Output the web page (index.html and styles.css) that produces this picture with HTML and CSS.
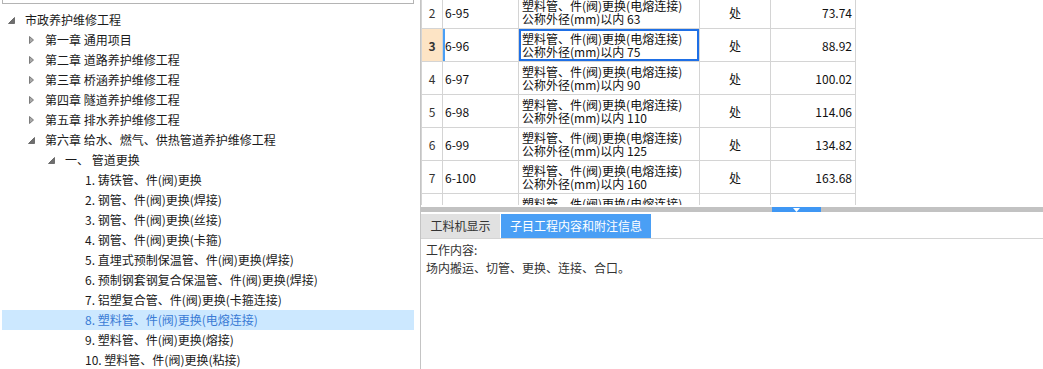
FILE: index.html
```html
<!DOCTYPE html>
<html lang="zh-CN">
  <head>
    <meta charset="utf-8">
    <title>定额库</title>
    <link rel="stylesheet" href="styles.css">
  </head>
  <body>
    <div class="tree-panel">
      <div class="search"></div>
      <ul class="tree">
        <li class="lv0"><span class="twisty"><svg width="7" height="7"><polygon points="6.5,0.5 6.5,6.5 0.5,6.5" class="open"/></svg></span><span class="label">市政养护维修工程</span></li>
        <li class="lv1"><span class="twisty"><svg width="5" height="8"><polygon points="0.5,0.5 4.5,4 0.5,7.5" class="shut"/></svg></span><span class="label">第一章 通用项目</span></li>
        <li class="lv1"><span class="twisty"><svg width="5" height="8"><polygon points="0.5,0.5 4.5,4 0.5,7.5" class="shut"/></svg></span><span class="label">第二章 道路养护维修工程</span></li>
        <li class="lv1"><span class="twisty"><svg width="5" height="8"><polygon points="0.5,0.5 4.5,4 0.5,7.5" class="shut"/></svg></span><span class="label">第三章 桥涵养护维修工程</span></li>
        <li class="lv1"><span class="twisty"><svg width="5" height="8"><polygon points="0.5,0.5 4.5,4 0.5,7.5" class="shut"/></svg></span><span class="label">第四章 隧道养护维修工程</span></li>
        <li class="lv1"><span class="twisty"><svg width="5" height="8"><polygon points="0.5,0.5 4.5,4 0.5,7.5" class="shut"/></svg></span><span class="label">第五章 排水养护维修工程</span></li>
        <li class="lv1"><span class="twisty"><svg width="7" height="7"><polygon points="6.5,0.5 6.5,6.5 0.5,6.5" class="open"/></svg></span><span class="label">第六章 给水、燃气、供热管道养护维修工程</span></li>
        <li class="lv2"><span class="twisty"><svg width="7" height="7"><polygon points="6.5,0.5 6.5,6.5 0.5,6.5" class="open"/></svg></span><span class="label">一、 管道更换</span></li>
        <li class="lv3"><span class="twisty"></span><span class="label">1. 铸铁管、件(阀)更换</span></li>
        <li class="lv3"><span class="twisty"></span><span class="label">2. 钢管、件(阀)更换(焊接)</span></li>
        <li class="lv3"><span class="twisty"></span><span class="label">3. 钢管、件(阀)更换(丝接)</span></li>
        <li class="lv3"><span class="twisty"></span><span class="label">4. 钢管、件(阀)更换(卡箍)</span></li>
        <li class="lv3"><span class="twisty"></span><span class="label">5. 直埋式预制保温管、件(阀)更换(焊接)</span></li>
        <li class="lv3"><span class="twisty"></span><span class="label">6. 预制钢套钢复合保温管、件(阀)更换(焊接)</span></li>
        <li class="lv3"><span class="twisty"></span><span class="label">7. 铝塑复合管、件(阀)更换(卡箍连接)</span></li>
        <li class="lv3 selected"><span class="twisty"></span><span class="label">8. 塑料管、件(阀)更换(电熔连接)</span></li>
        <li class="lv3"><span class="twisty"></span><span class="label">9. 塑料管、件(阀)更换(熔接)</span></li>
        <li class="lv3"><span class="twisty"></span><span class="label">10. 塑料管、件(阀)更换(粘接)</span></li>
      </ul>
    </div>

    <div class="main">
      <div class="grid-view">
        <table class="items">
          <colgroup>
            <col class="c-no"><col class="c-code"><col class="c-name"><col class="c-unit"><col class="c-amount">
          </colgroup>
          <tr>
            <td class="no">2</td><td class="code">6-95</td>
            <td class="name">塑料管、件(阀)更换(电熔连接)<br>公称外径(mm)以内 63</td>
            <td class="unit">处</td><td class="amount">73.74</td>
          </tr>
          <tr class="current">
            <td class="no">3</td><td class="code">6-96</td>
            <td class="name">塑料管、件(阀)更换(电熔连接)<br>公称外径(mm)以内 75</td>
            <td class="unit">处</td><td class="amount">88.92</td>
          </tr>
          <tr>
            <td class="no">4</td><td class="code">6-97</td>
            <td class="name">塑料管、件(阀)更换(电熔连接)<br>公称外径(mm)以内 90</td>
            <td class="unit">处</td><td class="amount">100.02</td>
          </tr>
          <tr>
            <td class="no">5</td><td class="code">6-98</td>
            <td class="name">塑料管、件(阀)更换(电熔连接)<br>公称外径(mm)以内 110</td>
            <td class="unit">处</td><td class="amount">114.06</td>
          </tr>
          <tr>
            <td class="no">6</td><td class="code">6-99</td>
            <td class="name">塑料管、件(阀)更换(电熔连接)<br>公称外径(mm)以内 125</td>
            <td class="unit">处</td><td class="amount">134.82</td>
          </tr>
          <tr>
            <td class="no">7</td><td class="code">6-100</td>
            <td class="name">塑料管、件(阀)更换(电熔连接)<br>公称外径(mm)以内 160</td>
            <td class="unit">处</td><td class="amount">163.68</td>
          </tr>
          <tr>
            <td class="no"></td><td class="code"></td>
            <td class="name">塑料管、件(阀)更换(电熔连接)<br>&nbsp;</td>
            <td class="unit">处</td><td class="amount"></td>
          </tr>
        </table>
      </div>

      <div class="splitter">
        <div class="handle"><svg width="7" height="4"><polygon points="0,0 7,0 3.5,4" fill="#fff"/></svg></div>
      </div>

      <div class="detail">
        <div class="tabs">
          <div class="tab">工料机显示</div>
          <div class="tab active">子目工程内容和附注信息</div>
        </div>
        <div class="notes">
          工作内容:<br>
          场内搬运、切管、更换、连接、合口。
        </div>
      </div>
    </div>
  </body>
</html>
```

FILE: styles.css
```css
/* page */
body {
  margin: 0;
  height: 369px;
  overflow: hidden;
  display: flex;
  background: #fff;
  color: #1a1a1a;
  font-family: "Noto Sans CJK SC", "Liberation Sans", sans-serif;
  font-size: 12px;
}

/* left: chapter tree */
.tree-panel {
  width: 420px;
  flex: none;
}

.search {
  height: 3px;
  margin: 0 6px 0 2px;
  border: 1px solid #b4b4b4;
  border-top: none;
}

.tree {
  list-style: none;
  margin: 6px 6px 0 2px;
  padding: 0;
}

.tree li {
  display: flex;
  align-items: center;
  height: 20px;
  line-height: 20px;
  white-space: nowrap;
}

.tree .lv0 { padding-left: 2px; }
.tree .lv1 { padding-left: 22px; }
.tree .lv2 { padding-left: 42px; }
.tree .lv3 { padding-left: 62px; }

.twisty {
  width: 14px;
  flex: none;
  display: flex;
  justify-content: center;
  align-items: center;
}

.twisty .open {
  fill: #6e6e6e;
  stroke: #6e6e6e;
  stroke-width: 1;
}

.twisty .shut {
  fill: #a8a8a8;
  stroke: #7c7c7c;
  stroke-width: 1;
}

.tree .label {
  margin-left: 7px;
}

.tree li.selected {
  background: #cce8ff;
  color: #3a7bd5;
}

/* right: item grid + detail */
.main {
  flex: 1;
  min-width: 0;
  display: flex;
  flex-direction: column;
  border-left: 1px solid #c4c4c4;
}

.grid-view {
  height: 205px;
  margin-bottom: 2px;
  overflow: hidden;
  flex: none;
}

.items {
  border-collapse: collapse;
  table-layout: fixed;
  width: 434px;
  margin-top: -5px;
}

.c-no { width: 21px; }
.c-code { width: 76px; }
.c-name { width: 181px; }
.c-unit { width: 71px; }
.c-amount { width: 85px; }

.items td {
  border: 1px solid #d4d4d4;
  height: 32px;
  padding: 0;
  line-height: 13px;
  vertical-align: middle;
  white-space: nowrap;
  overflow: hidden;
  color: #111;
}

.items td.no { text-align: center; color: #333; }
.items td.code { padding-left: 2px; }
.items td.name { padding-left: 3px; }
.items td.unit { text-align: center; }
.items td.amount { text-align: right; padding-right: 3px; }

.items tr.current td.no {
  background: #fde4c5;
  font-weight: bold;
}

.items tr.current td.code {
  box-shadow: inset 2px 0 0 #4a9ff5;
}

.items tr.current td.name {
  box-shadow: inset 0 0 0 2px #1e6fe6;
}

.splitter {
  height: 5px;
  flex: none;
  display: flex;
  background: #c2c2c2;
}

.splitter .handle {
  margin-left: 351px;
  width: 49px;
  display: flex;
  justify-content: center;
  align-items: center;
  background: #3f97f4;
}

.detail {
  flex: 1;
}

.tabs {
  display: flex;
  gap: 1px;
  height: 24px;
  margin-top: 2px;
  border-bottom: 1px solid #d4d4d4;
}

.tab {
  width: 79px;
  line-height: 24px;
  text-align: center;
  background: #e1e1e1;
  color: #333;
}

.tab.active {
  width: 150px;
  background: #4a9ff5;
  color: #fff;
}

.notes {
  padding: 2px 5px;
  line-height: 18px;
  color: #333;
}
```
